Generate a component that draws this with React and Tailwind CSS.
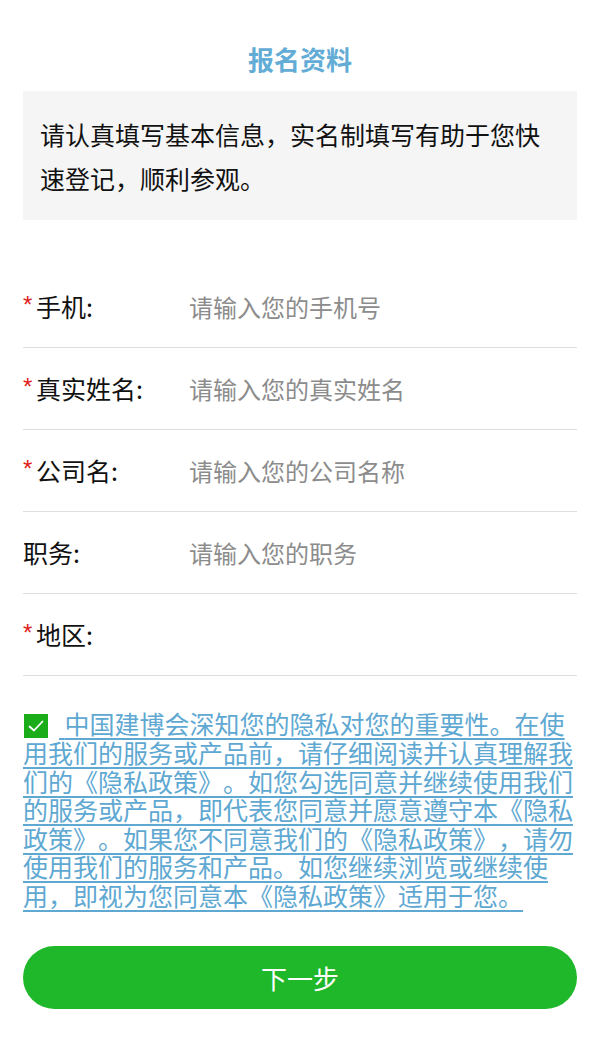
import React from "react";

const font = { fontFamily: '"Noto Sans CJK SC", "Noto Sans", sans-serif' };

function Row({ label, required, placeholder }) {
  return (
    <div className="flex h-[82px] items-center border-b border-[#dedede]">
      <div className="flex w-[166px] shrink-0 items-center text-[25px] leading-none text-[#111]">
        {required ? (
          <span className="relative top-[-2px] inline-block w-[13px] text-[24px] leading-none text-[#e0201c]" style={{ fontFamily: '"Liberation Sans", sans-serif' }}>*</span>
        ) : null}
        <span>{label}:</span>
      </div>
      {placeholder ? (
        <input
          className="min-w-0 flex-1 bg-transparent text-[24px] text-[#111] outline-none placeholder:text-[#8c8c8c]"
          style={font}
          placeholder={placeholder}
        />
      ) : (
        <div className="flex-1" />
      )}
    </div>
  );
}

export default function App() {
  return (
    <div className="min-h-[1043px] w-full bg-white px-[23px] [text-spacing-trim:space-all]" style={font}>
      <div className="pt-[40px] pb-[13px] text-center text-[26px] font-bold leading-[38px] text-[#62acd6]">
        报名资料
      </div>

      <div className="bg-[#f5f5f5] pt-[21px] pb-[20px] pl-[17px] pr-[17px] text-[25px] leading-[44px] text-[#111]">
        请认真填写基本信息，实名制填写有助于您快速登记，顺利参观。
      </div>

      <div className="mt-[46px]">
        <Row label="手机" required placeholder="请输入您的手机号" />
        <Row label="真实姓名" required placeholder="请输入您的真实姓名" />
        <Row label="公司名" required placeholder="请输入您的公司名称" />
        <Row label="职务" placeholder="请输入您的职务" />
        <Row label="地区" required />
      </div>

      <div className="mt-[33px] text-[25px] leading-[28.5px] text-[#5ea8d2]">
        <span className="ml-[1px] mr-[11px] inline-flex h-[24px] w-[24px] items-center justify-center bg-[#1aad19] align-[-2px]">
          <svg width="20" height="20" viewBox="0 0 20 20" fill="none">
            <path d="M3.5 10.5 L8 14.5 L16.5 5.5" stroke="white" strokeWidth="1.8" strokeLinecap="round" strokeLinejoin="round" />
          </svg>
        </span>
        <span className="underline decoration-[2px] underline-offset-[4px]">
          {"\u00a0"}中国建博会深知您的隐私对您的重要性。在使用我们的服务或产品前，请仔细阅读并认真理解我们的《隐私政策》。如您勾选同意并继续使用我们的服务或产品，即代表您同意并愿意遵守本《隐私政策》。如果您不同意我们的《隐私政策》，请勿使用我们的服务和产品。如您继续浏览或继续使用，即视为您同意本《隐私政策》适用于您。
        </span>
      </div>

      <button
        className="mt-[37px] flex h-[63px] w-full items-center justify-center rounded-full bg-[#1fb82a] text-[26px] text-white"
        style={font}
      >
        下一步
      </button>
    </div>
  );
}
